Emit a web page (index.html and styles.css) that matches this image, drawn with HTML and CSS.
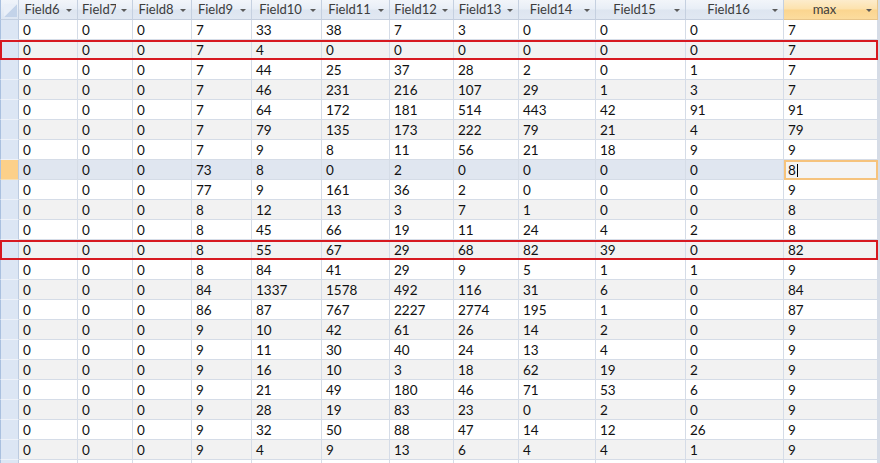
FILE: index.html
```html
<!DOCTYPE html>
<html>
<head>
<meta charset="utf-8">
<link rel="stylesheet" href="styles.css">
</head>
<body>
<div class="sheet">
  <div class="hdr">
    <div class="corner"><svg width="18" height="19" viewBox="0 0 18 19"><polygon points="3,17 16,17 16,4" fill="#c3d3e9"/><polygon points="3,17 16,4 3,4" fill="#e9eff8"/></svg></div>
    <div class="hc"><span class="lbl"><b>Field6</b></span><i class="arr"></i></div>
    <div class="hc"><span class="lbl"><b>Field7</b></span><i class="arr"></i></div>
    <div class="hc"><span class="lbl"><b>Field8</b></span><i class="arr"></i></div>
    <div class="hc"><span class="lbl"><b>Field9</b></span><i class="arr"></i></div>
    <div class="hc"><span class="lbl"><b>Field10</b></span><i class="arr"></i></div>
    <div class="hc"><span class="lbl"><b>Field11</b></span><i class="arr"></i></div>
    <div class="hc"><span class="lbl"><b>Field12</b></span><i class="arr"></i></div>
    <div class="hc"><span class="lbl"><b>Field13</b></span><i class="arr"></i></div>
    <div class="hc"><span class="lbl"><b>Field14</b></span><i class="arr"></i></div>
    <div class="hc"><span class="lbl"><b>Field15</b></span><i class="arr"></i></div>
    <div class="hc"><span class="lbl"><b>Field16</b></span><i class="arr"></i></div>
    <div class="hc hot"><span class="lbl"><b>max</b></span><i class="arr"></i></div>
  </div>
  <div class="row"><i class="rs"></i><span>0</span><span>0</span><span>0</span><span>7</span><span>33</span><span>38</span><span>7</span><span>3</span><span>0</span><span>0</span><span>0</span><span>7</span></div>
  <div class="row alt mark"><i class="rs"></i><span>0</span><span>0</span><span>0</span><span>7</span><span>4</span><span>0</span><span>0</span><span>0</span><span>0</span><span>0</span><span>0</span><span>7</span></div>
  <div class="row"><i class="rs"></i><span>0</span><span>0</span><span>0</span><span>7</span><span>44</span><span>25</span><span>37</span><span>28</span><span>2</span><span>0</span><span>1</span><span>7</span></div>
  <div class="row alt"><i class="rs"></i><span>0</span><span>0</span><span>0</span><span>7</span><span>46</span><span>231</span><span>216</span><span>107</span><span>29</span><span>1</span><span>3</span><span>7</span></div>
  <div class="row"><i class="rs"></i><span>0</span><span>0</span><span>0</span><span>7</span><span>64</span><span>172</span><span>181</span><span>514</span><span>443</span><span>42</span><span>91</span><span>91</span></div>
  <div class="row alt"><i class="rs"></i><span>0</span><span>0</span><span>0</span><span>7</span><span>79</span><span>135</span><span>173</span><span>222</span><span>79</span><span>21</span><span>4</span><span>79</span></div>
  <div class="row"><i class="rs"></i><span>0</span><span>0</span><span>0</span><span>7</span><span>9</span><span>8</span><span>11</span><span>56</span><span>21</span><span>18</span><span>9</span><span>9</span></div>
  <div class="row cur"><i class="rs"></i><span>0</span><span>0</span><span>0</span><span>73</span><span>8</span><span>0</span><span>2</span><span>0</span><span>0</span><span>0</span><span>0</span><span class="edit">8<i class="caret"></i></span></div>
  <div class="row"><i class="rs"></i><span>0</span><span>0</span><span>0</span><span>77</span><span>9</span><span>161</span><span>36</span><span>2</span><span>0</span><span>0</span><span>0</span><span>9</span></div>
  <div class="row alt"><i class="rs"></i><span>0</span><span>0</span><span>0</span><span>8</span><span>12</span><span>13</span><span>3</span><span>7</span><span>1</span><span>0</span><span>0</span><span>8</span></div>
  <div class="row"><i class="rs"></i><span>0</span><span>0</span><span>0</span><span>8</span><span>45</span><span>66</span><span>19</span><span>11</span><span>24</span><span>4</span><span>2</span><span>8</span></div>
  <div class="row alt mark"><i class="rs"></i><span>0</span><span>0</span><span>0</span><span>8</span><span>55</span><span>67</span><span>29</span><span>68</span><span>82</span><span>39</span><span>0</span><span>82</span></div>
  <div class="row"><i class="rs"></i><span>0</span><span>0</span><span>0</span><span>8</span><span>84</span><span>41</span><span>29</span><span>9</span><span>5</span><span>1</span><span>1</span><span>9</span></div>
  <div class="row alt"><i class="rs"></i><span>0</span><span>0</span><span>0</span><span>84</span><span>1337</span><span>1578</span><span>492</span><span>116</span><span>31</span><span>6</span><span>0</span><span>84</span></div>
  <div class="row"><i class="rs"></i><span>0</span><span>0</span><span>0</span><span>86</span><span>87</span><span>767</span><span>2227</span><span>2774</span><span>195</span><span>1</span><span>0</span><span>87</span></div>
  <div class="row alt"><i class="rs"></i><span>0</span><span>0</span><span>0</span><span>9</span><span>10</span><span>42</span><span>61</span><span>26</span><span>14</span><span>2</span><span>0</span><span>9</span></div>
  <div class="row"><i class="rs"></i><span>0</span><span>0</span><span>0</span><span>9</span><span>11</span><span>30</span><span>40</span><span>24</span><span>13</span><span>4</span><span>0</span><span>9</span></div>
  <div class="row alt"><i class="rs"></i><span>0</span><span>0</span><span>0</span><span>9</span><span>16</span><span>10</span><span>3</span><span>18</span><span>62</span><span>19</span><span>2</span><span>9</span></div>
  <div class="row"><i class="rs"></i><span>0</span><span>0</span><span>0</span><span>9</span><span>21</span><span>49</span><span>180</span><span>46</span><span>71</span><span>53</span><span>6</span><span>9</span></div>
  <div class="row alt"><i class="rs"></i><span>0</span><span>0</span><span>0</span><span>9</span><span>28</span><span>19</span><span>83</span><span>23</span><span>0</span><span>2</span><span>0</span><span>9</span></div>
  <div class="row"><i class="rs"></i><span>0</span><span>0</span><span>0</span><span>9</span><span>32</span><span>50</span><span>88</span><span>47</span><span>14</span><span>12</span><span>26</span><span>9</span></div>
  <div class="row alt"><i class="rs"></i><span>0</span><span>0</span><span>0</span><span>9</span><span>4</span><span>9</span><span>13</span><span>6</span><span>4</span><span>4</span><span>1</span><span>9</span></div>
  <div class="row"><i class="rs"></i><span></span><span></span><span></span><span></span><span></span><span></span><span></span><span></span><span></span><span></span><span></span><span></span></div>
</div>
</body>
</html>
```
FILE: styles.css
```css
html, body {
  margin: 0;
  padding: 0;
  background: #ffffff;
  overflow: hidden;
}
body {
  width: 880px;
  height: 463px;
  font-family: Lato, "Liberation Sans", sans-serif;
  font-size: 13.5px;
  color: #111;
}
.sheet {
  width: 880px;
  border-right: 2px solid #d6dce6;
  box-sizing: border-box;
}
.hdr, .row {
  display: grid;
  grid-template-columns: 19px 59px 55px 59px 60px 70px 68px 64px 65px 77px 90px 98px 94px;
}
.hdr {
  height: 20px;
  font-size: 13px;
}
.corner {
  box-sizing: border-box;
  background: linear-gradient(#f0f4fa, #dde6f2);
  border-right: 1px solid #c3cfe0;
  border-bottom: 1px solid #c3cfe0;
  border-left: 1px solid #a9c0df;
}
.corner svg { display: block; }
.hc {
  box-sizing: border-box;
  display: flex;
  align-items: center;
  background: linear-gradient(#f2f5fa 0%, #e8eef6 48%, #dde5f0 52%, #e1e8f2 100%);
  border-right: 1px solid #c5d0e0;
  border-bottom: 1px solid #c3cddd;
  color: #3c3c3c;
  min-width: 0;
}
.hc.hot {
  background: linear-gradient(#fdeccc 0%, #fde2ad 48%, #fbd58f 52%, #fcdc9e 100%);
  border-right-color: #e7c68e;
  border-bottom-color: #e8c58a;
}
.lbl {
  flex: 1;
  min-width: 0;
  display: flex;
  overflow: hidden;
  padding-left: 4px;
}
.lbl b {
  font-weight: normal;
  margin: 0 auto;
  white-space: nowrap;
  flex-shrink: 0;
  line-height: 19px;
}
.arr {
  flex: 0 0 16px;
  height: 19px;
  position: relative;
}
.arr::after {
  content: "";
  position: absolute;
  left: 5px;
  top: 9px;
  border-left: 3px solid transparent;
  border-right: 3px solid transparent;
  border-top: 3px solid #5a5a5a;
}
.row {
  height: 20px;
  background: #ffffff;
}
.row.alt { background: #f2f2f2; }
.row.cur { background: #e0e6f0; }
.row > span {
  box-sizing: border-box;
  border-right: 1px solid #d5dce7;
  border-bottom: 1px solid #d5dce7;
  padding-left: 4px;
  line-height: 20px;
  white-space: nowrap;
  overflow: hidden;
}
.rs {
  box-sizing: border-box;
  background: #dce6f4;
  border-left: 1px solid #a9c0df;
  border-right: 1px solid #bccbe0;
  border-bottom: 1px solid #eef2f9;
}
.row.cur .rs { background: #fcd089; border-bottom-color: #f5dfb5; }
.row.mark {
  position: relative;
  z-index: 1;
  outline: 2px solid #d71920;
  outline-offset: -2px;
}
.row > span.edit {
  position: relative;
  background: #f4f4f4;
  outline: 2px solid #f6c37c;
  outline-offset: -2px;
}
.caret {
  display: inline-block;
  width: 1px;
  height: 13px;
  background: #000;
  vertical-align: -2px;
  margin-left: 1px;
}
```
